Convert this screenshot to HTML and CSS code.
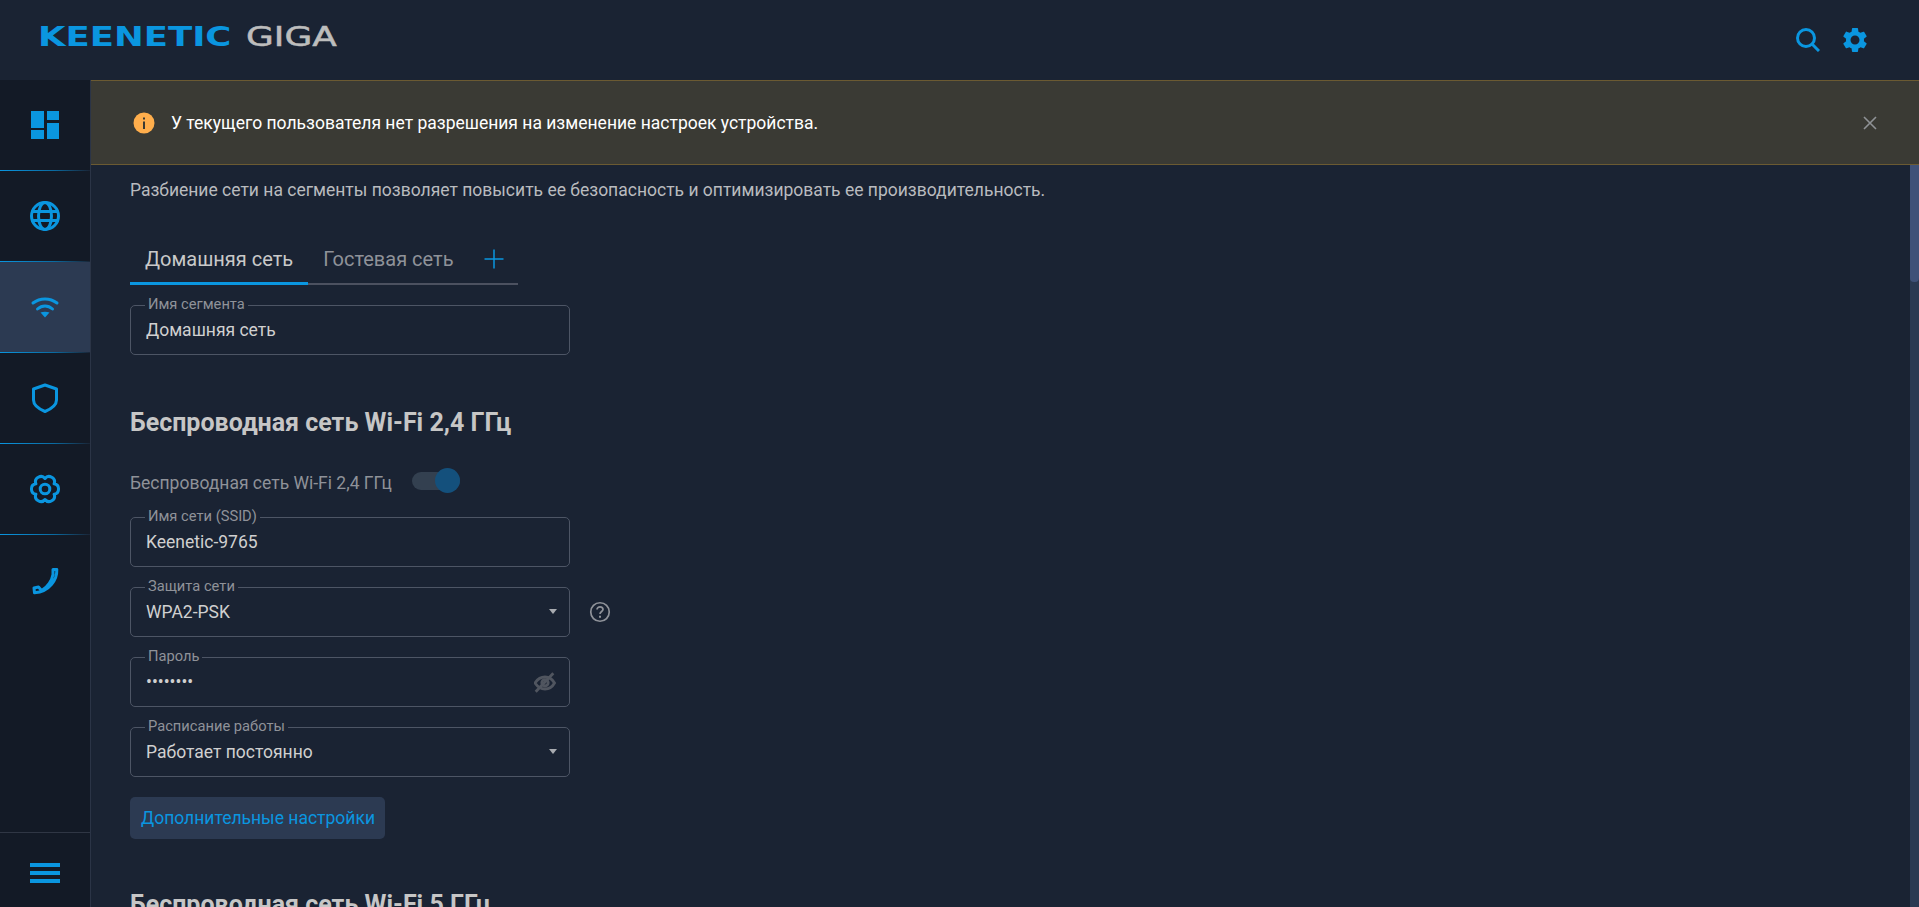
FILE: index.html
```html
<!DOCTYPE html>
<html lang="ru">
<head>
<meta charset="utf-8">
<title>Keenetic Giga</title>
<link rel="stylesheet" href="styles.css">
</head>
<body>
<header class="topbar">
  <div class="logo">
    <span class="logo-brand">KEENETIC</span>
    <span class="logo-model">GIGA</span>
  </div>
  <div class="top-actions">
    <svg class="top-search" width="24" height="24" viewBox="0 0 24 24"><circle cx="10" cy="10" r="8.5"/><path d="M16 16l7 7"/></svg>
    <svg class="top-gear" width="30" height="30" viewBox="0 0 24 24"><path d="M19.14 12.94c.04-.3.06-.61.06-.94 0-.32-.02-.64-.07-.94l2.03-1.58c.18-.14.23-.41.12-.61l-1.92-3.32c-.12-.22-.37-.29-.59-.22l-2.39.96c-.5-.38-1.03-.7-1.62-.94l-.36-2.54c-.04-.24-.24-.41-.48-.41h-3.84c-.24 0-.43.17-.47.41l-.36 2.54c-.59.24-1.13.57-1.62.94l-2.39-.96c-.22-.08-.47 0-.59.22L2.74 8.87c-.12.21-.08.47.12.61l2.03 1.58c-.05.3-.09.63-.09.94s.02.64.07.94l-2.03 1.58c-.18.14-.23.41-.12.61l1.92 3.32c.12.22.37.29.59.22l2.39-.96c.5.38 1.03.7 1.62.94l.36 2.54c.05.24.24.41.48.41h3.84c.24 0 .44-.17.47-.41l.36-2.54c.59-.24 1.13-.56 1.62-.94l2.39.96c.22.08.47 0 .59-.22l1.92-3.32c.12-.22.07-.47-.12-.61l-2.01-1.58zM12 15.6c-1.98 0-3.6-1.62-3.6-3.6s1.62-3.6 3.6-3.6 3.6 1.62 3.6 3.6-1.62 3.6-3.6 3.6z"/></svg>
  </div>
</header>
<div class="shell">
  <nav class="sidebar">
    <a class="nav-item">
      <svg class="nav-fill" width="30" height="30" viewBox="0 0 30 30"><rect x="1" y="1" width="13" height="17"/><rect x="17" y="1" width="12" height="9"/><rect x="1" y="20" width="13" height="9"/><rect x="17" y="13" width="12" height="16"/></svg>
    </a>
    <a class="nav-item">
      <svg class="nav-line" width="30" height="30" viewBox="0 0 30 30"><circle cx="15" cy="15" r="13.5"/><ellipse cx="15" cy="15" rx="6.5" ry="13.5"/><path d="M2.5 10.5h25M2.5 19.5h25"/></svg>
    </a>
    <a class="nav-item nav-item-active">
      <svg class="nav-line" width="30" height="30" viewBox="0 0 30 30"><path d="M3 11C10 5.5 20 5.5 27 11M7.5 17C12 13 18 13 22.5 17"/><path class="nav-solid" d="M10.5 20.6C13 19.3 17 19.3 19.5 20.6L15 25.5z"/></svg>
    </a>
    <a class="nav-item">
      <svg class="nav-line" width="30" height="30" viewBox="0 0 30 30"><path d="M15 2L26.5 6V17C26.5 22 21 26 15 28.5C9 26 3.5 22 3.5 17V6z"/></svg>
    </a>
    <a class="nav-item">
      <svg class="nav-line" width="30" height="30" viewBox="-15 -15 30 30"><path d="M0-10.5C3.6-15.25 11.4-10.74 9.1-5.25C15-4.5 15 4.5 9.1 5.25C11.4 10.74 3.6 15.25 0 10.5C-3.6 15.25-11.4 10.74-9.1 5.25C-15 4.5-15-4.5-9.1-5.25C-11.4-10.74-3.6-15.25 0-10.5z"/><circle r="4.8"/></svg>
    </a>
    <a class="nav-item nav-item-last">
      <svg class="nav-line nav-phone" width="30" height="30" viewBox="0 0 30 30"><path d="M23 3.5H26.8C27.2 13 20 25.5 4.5 26.8L4 22L8.5 21L11.5 24.5C18 21.5 22 14 23 8.5z"/></svg>
    </a>
    <div class="nav-menu">
      <span class="burger"></span>
      <span class="burger"></span>
      <span class="burger"></span>
    </div>
  </nav>
  <div class="main">
    <div class="alert">
      <svg class="alert-icon" width="22" height="22" viewBox="0 0 22 22"><circle class="alert-disc" cx="11" cy="11" r="10.5"/><rect class="alert-mark" x="10" y="9.5" width="2" height="7.5"/><rect class="alert-mark" x="10" y="5.5" width="2" height="2"/></svg>
      <span class="alert-text">У текущего пользователя нет разрешения на изменение настроек устройства.</span>
      <svg class="alert-close" width="14" height="14" viewBox="0 0 14 14"><path d="M1 1l12 12M13 1L1 13"/></svg>
    </div>
    <div class="scroller">
      <div class="content">
        <p class="lead">Разбиение сети на сегменты позволяет повысить ее безопасность и оптимизировать ее производительность.</p>
        <div class="tabs">
          <a class="tab tab-active">Домашняя сеть</a>
          <a class="tab">Гостевая сеть</a>
          <svg class="tab-add" width="20" height="20" viewBox="0 0 20 20"><path d="M10 0.5v19M0.5 10h19"/></svg>
        </div>
        <div class="field field-first">
          <span class="field-label">Имя сегмента</span>
          <span class="field-value">Домашняя сеть</span>
        </div>
        <h2 class="section-title">Беспроводная сеть Wi-Fi 2,4 ГГц</h2>
        <div class="toggle-row">
          <span class="toggle-label">Беспроводная сеть Wi-Fi 2,4 ГГц</span>
          <span class="toggle"><span class="toggle-thumb"></span></span>
        </div>
        <div class="field field-ssid">
          <span class="field-label">Имя сети (SSID)</span>
          <span class="field-value">Keenetic-9765</span>
        </div>
        <div class="field-row">
          <div class="field">
            <span class="field-label">Защита сети</span>
            <span class="field-value">WPA2-PSK</span>
            <span class="caret"></span>
          </div>
          <svg class="help" width="22" height="22" viewBox="0 0 22 22"><circle cx="11" cy="11" r="9.25"/><path d="M8 8.6C8 6.8 9.4 5.8 11 5.8S14 6.9 14 8.5C14 10.5 11 10.6 11 13"/><path class="help-dot" d="M10 14.8h2v2h-2z"/></svg>
        </div>
        <div class="field">
          <span class="field-label">Пароль</span>
          <span class="field-value">••••••••</span>
          <svg class="eye" width="22" height="22" viewBox="0 0 22 22"><path d="M1 12C4 7.5 7.5 6 11 6S18 7.5 20.5 12C18 16.5 14.5 18 11 18S4 16.5 1 12z"/><circle cx="11" cy="11.8" r="3.2"/><path d="M19.3 2.3L1.7 20.7"/></svg>
        </div>
        <div class="field">
          <span class="field-label">Расписание работы</span>
          <span class="field-value">Работает постоянно</span>
          <span class="caret"></span>
        </div>
        <button class="more" type="button">Дополнительные настройки</button>
        <h2 class="section-title section-next">Беспроводная сеть Wi-Fi 5 ГГц</h2>
      </div>
      <div class="scrolltrack"><div class="scrollthumb"></div></div>
    </div>
  </div>
</div>
</body>
</html>
```

FILE: styles.css
```css
* { box-sizing: border-box; }

html, body {
  margin: 0;
  height: 100%;
  overflow: hidden;
}

body {
  display: flex;
  flex-direction: column;
  background: #1a2333;
  font-family: Roboto, "Liberation Sans", sans-serif;
  font-size: 17.5px;
  color: #c9c9c9;
}

.topbar {
  flex: 0 0 80px;
  display: flex;
  align-items: center;
  justify-content: space-between;
  padding: 0 49px 0 38px;
}

.logo {
  display: flex;
  margin-top: -7px;
  font-family: "DejaVu Sans", sans-serif;
  font-size: 26px;
  line-height: 30px;
}

.logo-brand {
  margin-right: 66px;
  font-weight: 700;
  color: #0a96e0;
  transform: scaleX(1.365);
  transform-origin: left center;
}

.logo-model {
  color: #bdbdbd;
  transform: scaleX(1.38);
  transform-origin: left center;
  -webkit-text-stroke: 0.5px #bdbdbd;
}

.top-actions {
  display: flex;
  align-items: center;
  gap: 20px;
  margin-top: -1px;
}

.top-search {
  fill: none;
  stroke: #0a96e0;
  stroke-width: 3;
}

.top-gear { fill: #0a96e0; }

.shell {
  flex: 1;
  display: flex;
  min-height: 0;
}

.sidebar {
  flex: 0 0 91px;
  display: flex;
  flex-direction: column;
  background: #131a26;
  border-right: 1px solid #2b3446;
}

.nav-item {
  flex: 0 0 91px;
  display: flex;
  align-items: center;
  justify-content: center;
  border-bottom: 1px solid;
  border-image: linear-gradient(90deg, #0a96e0 0%, #0a6aa0 60%, #1a2333 100%) 1;
}

.nav-item-active { background: #2c3a52; }

.nav-item-last { border-bottom: 0; }

.nav-fill { fill: #0a96e0; }

.nav-line {
  fill: none;
  stroke: #0a96e0;
  stroke-width: 3;
  stroke-linejoin: round;
  stroke-linecap: round;
}

.nav-phone { stroke-width: 3; }

.nav-solid {
  fill: #0a96e0;
  stroke: none;
}

.nav-menu {
  margin-top: auto;
  flex: 0 0 75px;
  display: flex;
  flex-direction: column;
  align-items: center;
  justify-content: center;
  gap: 4px;
  padding-top: 6px;
  border-top: 1px solid #2f3644;
}

.burger {
  width: 30px;
  height: 4px;
  background: #0a96e0;
}

.main {
  flex: 1;
  min-width: 0;
  display: flex;
  flex-direction: column;
}

.alert {
  flex: 0 0 85px;
  display: flex;
  align-items: center;
  gap: 16px;
  padding: 0 42px;
  background: #3a3a34;
  border-top: 1px solid #6b5a32;
  border-bottom: 1px solid #6b5a32;
}

.alert-disc { fill: #ffae4c; }

.alert-mark { fill: #3a3a34; }

.alert-text {
  flex: 1;
  color: #fff;
}

.alert-close {
  fill: none;
  stroke: #8f9296;
  stroke-width: 1.6;
}

.scroller {
  flex: 1;
  min-height: 0;
  display: flex;
  overflow: hidden;
}

.content {
  flex: 1;
  min-width: 0;
  padding: 15px 0 0 39px;
}

.scrolltrack {
  flex: 0 0 9px;
  background: #2a3952;
}

.scrollthumb {
  height: 117px;
  background: #3f5178;
  border-radius: 0 0 4px 4px;
}

.lead {
  margin: 0;
  line-height: 20px;
  color: #b9bbbf;
}

.tabs {
  display: flex;
  align-items: flex-start;
  width: 388px;
  height: 50px;
  margin-top: 35px;
  border-bottom: 2px solid #4c5160;
}

.tab {
  height: 50px;
  padding: 0 15px;
  display: flex;
  align-items: center;
  font-size: 20px;
  color: #8f9299;
  border-bottom: 3px solid transparent;
}

.tab-active {
  color: #c9c9c9;
  border-bottom-color: #0a96e0;
}

.tab-add {
  margin: 14px 0 0 15px;
  fill: none;
  stroke: #0a96e0;
  stroke-width: 1.5;
}

.field {
  position: relative;
  width: 440px;
  height: 50px;
  margin-top: 20px;
  padding: 0 15px;
  display: flex;
  align-items: center;
  border: 1px solid #4d5565;
  border-radius: 5px;
}

.field-label {
  position: absolute;
  top: -10px;
  left: 14px;
  padding: 0 3px;
  background: #1a2333;
  font-size: 14.7px;
  line-height: 16px;
  color: #8f9299;
}

.field-value { color: #d0d0d0; }

.field-ssid { margin-top: 24px; }

.field-row {
  display: flex;
  align-items: flex-end;
}

.help {
  margin: 0 0 14px 19px;
  fill: none;
  stroke: #8f9299;
  stroke-width: 1.7;
}

.help-dot {
  fill: #8f9299;
  stroke: none;
}

.caret {
  position: absolute;
  right: 12px;
  top: 21px;
  border-left: 4px solid transparent;
  border-right: 4px solid transparent;
  border-top: 5px solid #a8abb0;
}

.eye {
  position: absolute;
  right: 13px;
  top: 13px;
  fill: none;
  stroke: #50555f;
  stroke-width: 2.8;
}

.section-title {
  margin: 53px 0 0;
  font-size: 25px;
  line-height: 30px;
  font-weight: 700;
  color: #c6c6c6;
}

.section-next { margin-top: 51px; }

.toggle-row {
  display: flex;
  align-items: flex-start;
  height: 25px;
  margin-top: 30px;
  gap: 20px;
}

.toggle-label {
  line-height: 20px;
  margin-top: 5px;
  color: #8f9299;
}

.toggle {
  position: relative;
  display: block;
  width: 48px;
  height: 18px;
  margin-top: 4px;
  border-radius: 9px;
  background: #334050;
}

.toggle-thumb {
  position: absolute;
  top: -4px;
  right: 0;
  width: 25px;
  height: 25px;
  border-radius: 50%;
  background: #14507c;
}

.more {
  display: block;
  height: 42px;
  width: 255px;
  margin-top: 20px;
  padding: 0 0 0 11px;
  border: 0;
  border-radius: 5px;
  background: #2c3a52;
  color: #0a96e0;
  font-family: Roboto, "Liberation Sans", sans-serif;
  font-size: 17.5px;
  text-align: left;
}
```
